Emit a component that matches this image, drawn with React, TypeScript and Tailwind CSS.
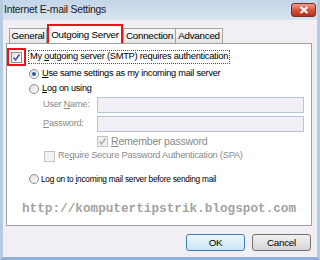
import React from "react"

const ui = { fontFamily: '"Liberation Sans", Arial, sans-serif' }

function Check({ checked, disabled }: { checked?: boolean; disabled?: boolean }) {
  return (
    <span className={`inline-flex h-[11px] w-[11px] shrink-0 items-center justify-center border ${disabled ? "border-[#c4c4c4] bg-[#f2f2f2]" : "border-[#8f8f8f] bg-gradient-to-br from-[#e4e4e4] to-white"}`}>
      {checked && (
        <svg width="9" height="9" viewBox="0 0 9 9">
          <path d="M1.5 4.5 L3.5 7 L7.5 1.5" fill="none" stroke={disabled ? "#b0b0b0" : "#3d56b8"} strokeWidth="1.6" />
        </svg>
      )}
    </span>
  )
}

function Radio({ on }: { on?: boolean }) {
  return (
    <span className="inline-flex h-[10px] w-[10px] shrink-0 items-center justify-center rounded-full border border-[#8e8f8f] bg-gradient-to-br from-[#dcdcdc] to-white">
      {on && <span className="h-[4px] w-[4px] rounded-full bg-[#2b5fa8]" />}
    </span>
  )
}

export default function App() {
  return (
    <div className="h-[260px] w-[320px] overflow-hidden bg-[#f1eef4] text-[9.8px] leading-none tracking-[-0.25px] text-black" style={ui}>
      <div className="flex h-[260px] flex-col border-x-[3px] border-b-[3px] border-x-[#b6cbe2] border-b-[#8fb0d4]">
        {/* title bar */}
        <div className="flex h-[20px] shrink-0 items-center justify-between bg-gradient-to-b from-[#c3d5e9] to-[#d9e4f0] pl-[1px] pr-[1px]">
          <span className="text-[10.4px] text-[#1b1b1b]">Internet E-mail Settings</span>
          <div className="flex h-[14px] w-[25px] items-center justify-center rounded-[3px] border border-[#7a2b22] bg-gradient-to-b from-[#e89f91] via-[#d3523c] to-[#b92d18]">
            <svg width="10" height="8" viewBox="0 0 10 8">
              <path d="M1.5 1 L8.5 7 M8.5 1 L1.5 7" stroke="white" strokeWidth="2" />
            </svg>
          </div>
        </div>

        {/* tabs */}
        <div className="mt-[4px] flex h-[19px] shrink-0 items-end pl-[6px]">
          <div className="flex h-[15px] w-[38px] items-center justify-center border border-b-0 border-[#a3a3a3] bg-gradient-to-b from-[#f7f7f7] to-[#e5e5e5]">General</div>
          <div className="relative z-10 flex h-[19px] w-[76px] items-center justify-center border-2 border-b-0 border-[#e3161b] bg-white">
            Outgoing Server
          </div>
          <div className="flex h-[15px] w-[53px] items-center justify-center border border-b-0 border-[#a3a3a3] bg-gradient-to-b from-[#f7f7f7] to-[#e5e5e5]">Connection</div>
          <div className="flex h-[15px] w-[47px] items-center justify-center border border-b-0 border-l-0 border-[#a3a3a3] bg-gradient-to-b from-[#f7f7f7] to-[#e5e5e5]">Advanced</div>
        </div>

        {/* panel */}
        <div className="ml-[3px] mr-[5px] flex h-[183px] shrink-0 flex-col border border-[#a0a0a0] bg-white">
          <div className="mt-[4px] flex h-[18px] items-center">
            <div className="flex h-[18px] w-[19px] items-center justify-center border-2 border-[#e3161b]">
              <Check checked />
            </div>
            <span className="ml-[2px] border border-dotted border-[#555] px-[1px] py-[1px] text-[9.3px]">
              My <u>o</u>utgoing server (SMTP) requires authentication
            </span>
          </div>
          <div className="ml-[22px] flex h-[15px] items-center gap-[3px] text-[9.2px]">
            <Radio on />
            <span><u>U</u>se same settings as my incoming mail server</span>
          </div>
          <div className="ml-[22px] flex h-[16px] items-center gap-[3px] text-[9.2px]">
            <Radio />
            <span><u>L</u>og on using</span>
          </div>
          <div className="ml-[36px] flex h-[16px] items-center text-[9.2px] text-[#8a8a8a]">
            <span className="w-[54px] whitespace-nowrap">User <u>N</u>ame:</span>
            <div className="mr-[7px] h-[16px] flex-1 border border-[#b7c3d6] bg-[#f2eef6]" />
          </div>
          <div className="mt-[3px] ml-[36px] flex h-[16px] items-center text-[9.2px] text-[#8a8a8a]">
            <span className="w-[54px]"><u>P</u>assword:</span>
            <div className="mr-[7px] h-[16px] flex-1 border border-[#b7c3d6] bg-[#f2eef6]" />
          </div>
          <div className="mt-[1px] ml-[90px] flex h-[16px] items-center gap-[3px] text-[10.6px] text-[#8a8a8a]">
            <Check checked disabled />
            <span><u>R</u>emember password</span>
          </div>
          <div className="ml-[37px] flex h-[14px] items-center gap-[3px] text-[9.3px] text-[#8a8a8a]">
            <Check disabled />
            <span>Re<u>q</u>uire Secure Password Authentication (SPA)</span>
          </div>
          <div className="mt-[8px] ml-[22px] flex h-[16px] items-center gap-[2px] text-[8.3px]">
            <Radio />
            <span>Log on to <u>i</u>ncoming mail server before sending mail</span>
          </div>
          <div className="mt-[14px] ml-[15px] flex h-[16px] items-center text-[12.7px] font-bold tracking-normal text-[#a3a3a3]" style={{ fontFamily: '"Liberation Mono", monospace' }}>
            http://komputertipstrik.blogspot.com
          </div>
        </div>

        {/* buttons */}
        <div className="mt-[8px] flex justify-end gap-[7px] pr-[6px]">
          <button className="flex h-[17px] w-[59px] items-center justify-center rounded-[3px] border border-[#3c7fb1] bg-gradient-to-b from-[#ecf6fc] to-[#cbe6f7]">OK</button>
          <button className="flex h-[17px] w-[59px] items-center justify-center rounded-[3px] border border-[#707070] bg-gradient-to-b from-[#f2f2f2] to-[#d5d5d5]">Cancel</button>
        </div>
      </div>
    </div>
  )
}
